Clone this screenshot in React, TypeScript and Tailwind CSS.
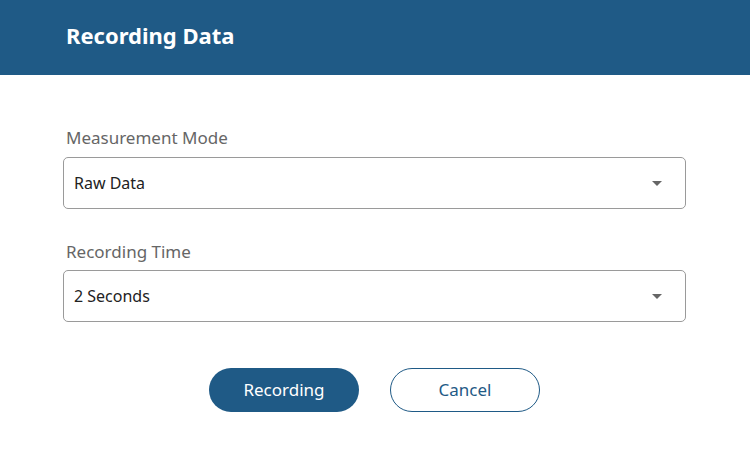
import React from "react";

function SelectBox({ value }: { value: string }) {
  return (
    <div className="flex items-center justify-between h-[52px] rounded-[5px] border border-[#9a9a9a] bg-white pl-[10px] pr-[23px]">
      <span className="text-[16px] text-[#222]">{value}</span>
      <svg width="10" height="5" viewBox="0 0 10 5">
        <path d="M0 0 L10 0 L5 5 Z" fill="#666" />
      </svg>
    </div>
  );
}

export default function App() {
  return (
    <div
      className="w-[750px] h-[450px] bg-white"
      style={{ fontFamily: '"Noto Sans", "Open Sans", sans-serif' }}
    >
      <div className="h-[75px] bg-[#1f5a86] flex items-center pl-[66px] pb-[4px]">
        <h1 className="text-[22px] font-bold text-white">Recording Data</h1>
      </div>
      <div className="pl-[63px] pr-[64px] pt-[52px]">
        <label className="block pl-[3px] text-[17px] leading-[22px] text-[#666] mb-[8px]">
          Measurement Mode
        </label>
        <SelectBox value="Raw Data" />
        <label className="block pl-[3px] mt-[32px] text-[17px] leading-[22px] text-[#666] mb-[7px]">
          Recording Time
        </label>
        <SelectBox value="2 Seconds" />
        <div className="flex justify-center gap-[31px] mt-[46px]">
          <button className="w-[150px] h-[44px] rounded-full bg-[#1f5a86] text-white text-[17px]">
            Recording
          </button>
          <button className="w-[150px] h-[44px] rounded-full border border-[#1f5a86] bg-white text-[#1f5a86] text-[17px]">
            Cancel
          </button>
        </div>
      </div>
    </div>
  );
}
